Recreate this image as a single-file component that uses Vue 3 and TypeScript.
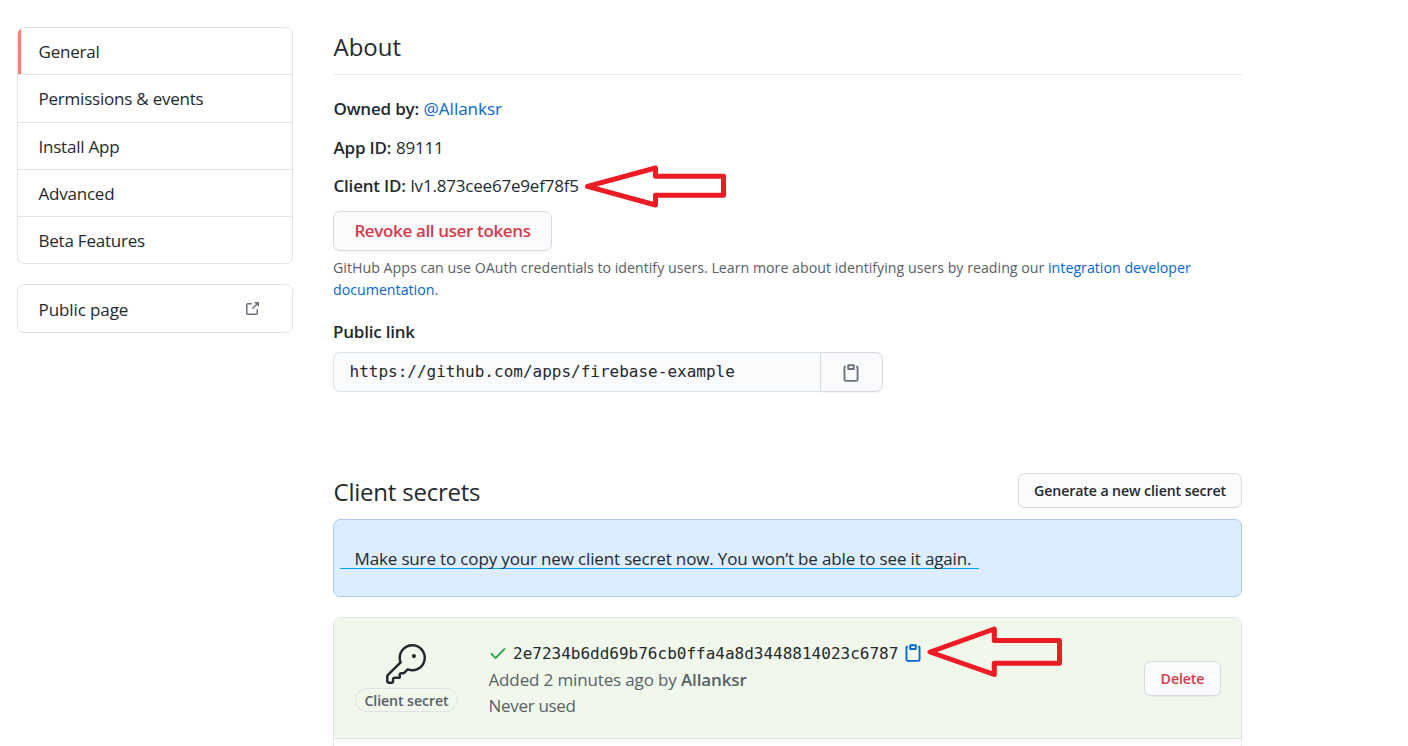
<script setup lang="ts">
const navItems: string[] = ['General', 'Permissions & events', 'Install App', 'Advanced', 'Beta Features']
const clipboardPath =
  'M5.75 1a.75.75 0 00-.75.75v3c0 .414.336.75.75.75h4.5a.75.75 0 00.75-.75v-3a.75.75 0 00-.75-.75h-4.5zm.75 3V2.5h3V4h-3zm-2.874-.467a.75.75 0 00-.752-1.298A1.75 1.75 0 002 3.75v9.5c0 .966.784 1.75 1.75 1.75h8.5A1.75 1.75 0 0014 13.25v-9.5a1.75 1.75 0 00-.874-1.515.75.75 0 10-.752 1.298.25.25 0 01.126.217v9.5a.25.25 0 01-.25.25h-8.5a.25.25 0 01-.25-.25v-9.5a.25.25 0 01.126-.217z'
</script>

<template>
  <div class="page">
    <aside class="sidebar">
      <nav class="menu sections">
        <a v-for="(item, i) in navItems" :key="item" class="menu-item" :class="{ active: i === 0 }">{{ item }}</a>
      </nav>
      <nav class="menu public">
        <a class="menu-item">
          <span>Public page</span>
          <svg class="ext" width="16" height="16" viewBox="0 0 16 16">
            <path fill-rule="evenodd" d="M10.604 1h4.146a.25.25 0 01.25.25v4.146a.25.25 0 01-.427.177L13.03 4.03 9.28 7.78a.75.75 0 01-1.06-1.06l3.75-3.75-1.543-1.543A.25.25 0 0110.604 1zM3.75 2A1.75 1.75 0 002 3.75v8.5c0 .966.784 1.75 1.75 1.75h8.5A1.75 1.75 0 0014 12.25v-3.5a.75.75 0 00-1.5 0v3.5a.25.25 0 01-.25.25h-8.5a.25.25 0 01-.25-.25v-8.5a.25.25 0 01.25-.25h3.5a.75.75 0 000-1.5h-3.5z" />
          </svg>
        </a>
      </nav>
    </aside>

    <main class="main">
      <h2 class="heading about">About</h2>
      <p class="fact owner"><b>Owned by:</b> <a class="link">@Allanksr</a></p>
      <p class="fact app-id"><b>App ID:</b> 89111</p>
      <p class="fact client-id"><b>Client ID:</b> lv1.873cee67e9ef78f5</p>
      <button class="btn revoke">Revoke all user tokens</button>
      <p class="note">
        <span class="note-first">GitHub Apps can use OAuth credentials to identify users. Learn more about identifying users by reading our <a class="link">integration developer</a></span><br />
        <a class="link">documentation</a>.
      </p>
      <div class="label">Public link</div>
      <div class="copy-field">
        <div class="url">https://github.com/apps/firebase-example</div>
        <button class="btn copy">
          <svg width="20" height="20" viewBox="0 0 16 16"><path fill-rule="evenodd" :d="clipboardPath" /></svg>
        </button>
      </div>

      <div class="secrets-head">
        <h2 class="heading secrets">Client secrets</h2>
        <button class="btn small generate">Generate a new client secret</button>
      </div>
      <div class="flash"><span class="flash-text">Make sure to copy your new client secret now. You won’t be able to see it again.</span></div>

      <section class="box">
        <div class="row">
          <div class="kind">
            <svg width="40" height="40" viewBox="0 0 24 24">
              <path d="M16.75 8.5a1.25 1.25 0 100-2.5 1.25 1.25 0 000 2.5z" />
              <path fill-rule="evenodd" d="M15.75 0a8.25 8.25 0 00-7.851 10.79L.513 18.178A1.75 1.75 0 000 19.414v2.836C0 23.217.784 24 1.75 24h1.5A1.75 1.75 0 005 22.25v-1a.25.25 0 01.25-.25h2.735a.75.75 0 00.545-.22l.214-.213A.875.875 0 009 19.948V18.5a.25.25 0 01.25-.25h1.086c.464 0 .91-.184 1.237-.513l1.636-1.636A8.25 8.25 0 1015.75 0zM9 8.25a6.75 6.75 0 114.288 6.287.75.75 0 00-.804.168l-1.971 1.972a.25.25 0 01-.177.073H9.25A1.75 1.75 0 007.5 18.5v1H5.25a1.75 1.75 0 00-1.75 1.75v1a.25.25 0 01-.25.25h-1.5a.25.25 0 01-.25-.25v-2.836a.25.25 0 01.073-.177l7.722-7.721a.75.75 0 00.168-.804A6.73 6.73 0 019 8.25z" />
            </svg>
            <span class="pill">Client secret</span>
          </div>
          <div class="details">
            <div class="secret">
              <svg class="check" width="20" height="20" viewBox="0 0 16 16"><path fill-rule="evenodd" d="M13.78 4.22a.75.75 0 010 1.06l-7.25 7.25a.75.75 0 01-1.06 0L2.22 9.28a.75.75 0 011.06-1.06L6 10.94l6.72-6.72a.75.75 0 011.06 0z" /></svg>
              <code>2e7234b6dd69b76cb0ffa4a8d3448814023c6787</code>
              <svg class="clip" width="20" height="20" viewBox="0 0 16 16"><path fill-rule="evenodd" :d="clipboardPath" /></svg>
            </div>
            <div class="meta added">Added 2 minutes ago by <b>Allanksr</b></div>
            <div class="meta used">Never used</div>
          </div>
          <button class="btn small delete">Delete</button>
        </div>
      </section>
    </main>

    <svg class="arrows" width="1408" height="746" viewBox="0 0 1408 746">
      <path d="M587.5 186.3L655.5 168V176.3H723.5V195.3H655.5V205Z" />
      <path d="M930 652L994.3 629V640.5H1059.5V663.3H994.3V674.5Z" />
    </svg>
  </div>
</template>

<style>
body { margin: 0; overflow: hidden; background: #fff; }
</style>

<style scoped>
.page {
  position: relative;
  box-sizing: border-box;
  display: flex;
  gap: 40px;
  width: 1408px;
  height: 746px;
  overflow: hidden;
  padding: 27px 0 0 17px;
  font: 17px/26px "Open Sans", "Noto Sans", sans-serif;
  letter-spacing: -0.22px;
  color: #24292e;
}
.page * { box-sizing: border-box; }
b { font-weight: 600; }
p, h2 { margin: 0; white-space: nowrap; }
.link { color: #0366d6; }

.sidebar { width: 276px; flex: none; }
.menu { border: 1px solid #e1e4e8; border-radius: 7px; overflow: hidden; display: grid; }
.sections { height: 237px; grid-template-rows: 46px 48px 47px 47px 47px; }
.menu-item { position: relative; display: flex; align-items: center; padding: 1px 32px 0 20.5px; border-top: 1px solid #e1e4e8; }
.menu-item:first-child { border-top: 0; }
.menu-item.active::before { content: ""; position: absolute; left: 0; top: 0; bottom: 0; width: 3px; background: #f9826c; }
.public { height: 49px; margin-top: 20px; }
.public .menu-item { justify-content: space-between; padding-top: 2px; }
.public span { letter-spacing: -0.1px; }
.ext { fill: #6a737d; margin-top: -2px; }

.main { width: 909px; flex: none; display: flex; flex-direction: column; align-items: flex-start; }
.main > * { flex: none; }
.heading { font-size: 24px; font-weight: 400; line-height: 40px; padding-left: 0.5px; }
.about { width: 100%; height: 48px; border-bottom: 1px solid #eaecef; letter-spacing: 0; }
.fact { height: 26px; margin-bottom: 12.6px; letter-spacing: -0.2px; padding-left: 0.5px; }
.fact b { margin-right: 0.5px; }
.owner { margin-top: 21px; }
.owner .link { letter-spacing: 0; }
.client-id { margin-bottom: 11.8px; }
.btn {
  display: flex; align-items: center; justify-content: center; padding: 0;
  font: inherit; font-weight: 600; letter-spacing: inherit; color: #24292e;
  background: #fafbfc; border: 1px solid #d8dadd; border-radius: 7px;
  box-shadow: 0 1px 0 rgba(27, 31, 35, 0.04); white-space: nowrap;
}
.revoke { width: 219px; height: 40px; color: #d73a49; letter-spacing: -0.36px; padding-top: 1px; }
.note { margin-top: 6px; font-size: 14.2px; line-height: 22px; letter-spacing: 0.01px; color: #586069; }
.label { font-weight: 600; margin-top: 18px; }
.copy-field { display: flex; width: 550px; height: 40px; margin-top: 7px; }
.url { width: 487px; border: 1px solid #e1e4e8; border-right: 0; border-radius: 7px 0 0 7px; background: #fafbfc; padding: 6px 15.5px; }
.url, code { font-family: "DejaVu Sans Mono", "Liberation Mono", monospace; font-size: 16px; letter-spacing: 0; }
.copy { width: 63px; border-radius: 0 7px 7px 0; padding: 2px 2px 0 0; }
.copy svg { fill: #6a737d; }

.secrets-head { display: flex; justify-content: space-between; width: 100%; margin-top: 81px; height: 46px; }
.secrets { line-height: 38px; }
.small { height: 35px; font-size: 14.2px; letter-spacing: -0.12px; padding-top: 1px; }
.generate { width: 224px; }
.flash { width: 100%; height: 78px; border: 1px solid #aecaea; border-radius: 7px; background: #dbedff; padding: 26px 0 0 6px; white-space: nowrap; }
.flash-text { display: block; width: 639px; height: 23px; padding-left: 14.5px; border-bottom: 1px solid #00a2e8; letter-spacing: -0.15px; }
.box { width: 100%; height: 160px; margin-top: 20px; border: 1px solid #e1e4e8; border-radius: 7px; overflow: hidden; }
.row { display: flex; height: 121px; background: #f0f8eb; border-bottom: 1px solid #e1e4e8; padding: 0 20px 0 21px; }
.kind { width: 103px; display: flex; flex-direction: column; align-items: center; padding-top: 26px; }
.kind svg { fill: #24292e; flex: none; margin-right: 1px; }
.pill { width: 103px; height: 24px; margin-top: 4px; border: 1px solid #dfe3e8; border-radius: 12px; text-align: center; font-size: 14.2px; line-height: 23px; letter-spacing: -0.1px; font-weight: 600; color: #586069; }
.details { margin-left: 30.5px; padding-top: 22px; flex: 1; }
.secret { display: flex; align-items: center; height: 26px; margin-left: -0.5px; }
.check { fill: #28a745; }
.secret code { margin-left: 5px; padding-top: 2px; }
.clip { fill: #0366d6; margin-left: 5px; }
.meta { color: #586069; white-space: nowrap; letter-spacing: -0.14px; }
.added { margin-top: 1px; }
.used { letter-spacing: -0.3px; }
.delete { width: 77px; margin-top: 43px; color: #d73a49; }

.arrows { position: absolute; left: 0; top: 0; pointer-events: none; }
.arrows path { fill: none; stroke: #ed1c24; stroke-width: 5; stroke-linejoin: round; }
</style>
